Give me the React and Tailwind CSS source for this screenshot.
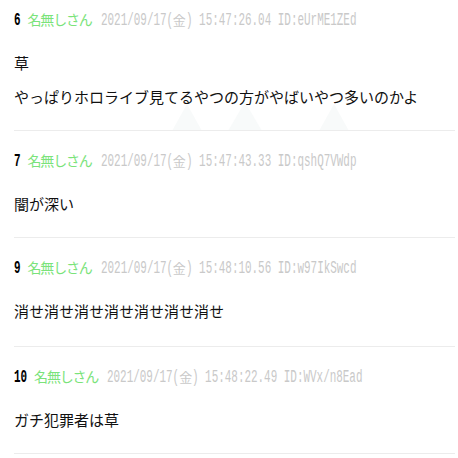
import React from "react";

const posts = [
  { no: "6", a: "2021/09/17(", b: ") 15:47:26.04 ID:eUrME1ZEd", body: ["草", "やっぱりホロライブ見てるやつの方がやばいやつ多いのかよ"] },
  { no: "7", a: "2021/09/17(", b: ") 15:47:43.33 ID:qshQ7VWdp", body: ["闇が深い"] },
  { no: "9", a: "2021/09/17(", b: ") 15:48:10.56 ID:w97IkSwcd", body: ["消せ消せ消せ消せ消せ消せ消せ"] },
  { no: "10", a: "2021/09/17(", b: ") 15:48:22.49 ID:WVx/n8Ead", body: ["ガチ犯罪者は草"] },
];

const mono = "font-['Liberation_Mono',monospace] text-[18px] inline-block origin-left scale-x-[0.607]";

function Header({ p }) {
  return (
    <div className="leading-[20px] h-[20px] whitespace-nowrap text-[13px] font-['Noto_Sans_CJK_JP',sans-serif]">
      <span className={`${mono} font-bold text-black ${p.no.length === 1 ? "mr-[-4.25px]" : "mr-[-8.5px]"}`}>{p.no}</span>
      <span className="ml-[7px] text-[14px] tracking-[-1.2px] text-[#7ae37a]">名無しさん</span>
      <span className="ml-[9px] text-[#c9c9c9]">
        <span className={`${mono} mr-[-46.75px]`}>{p.a}</span>
        <span>金</span>
        <span className={mono}>{p.b}</span>
      </span>
    </div>
  );
}

export default function App() {
  return (
    <div className="relative w-[458px] h-[458px] overflow-hidden bg-white">
      <svg className="absolute left-0 top-0" width="458" height="140" viewBox="0 0 458 140">
        <polygon points="172,131 187,104 202,131" fill="#f8fafa" />
        <polygon points="228,131 245,102 262,131" fill="#f8fafa" />
        <polygon points="319,131 334,104 349,131" fill="#f8fafa" />
      </svg>
      <div className="relative ml-[14px] mr-[3px]">
        {posts.map((p, i) => (
          <div
            key={p.no}
            className={`border-b border-[#ececec] ${i === 0 ? "pt-[9px] pb-[16px]" : i === 2 ? "pt-[19px] pb-[18px]" : "pt-[19px] pb-[16px]"}`}
          >
            <Header p={p} />
            <div className="mt-[17px] text-[15px] leading-[34px] text-[#111] font-['Noto_Sans_CJK_JP',sans-serif]">
              {p.body.map((l, j) => (
                <div key={j}>{l}</div>
              ))}
            </div>
          </div>
        ))}
      </div>
    </div>
  );
}
